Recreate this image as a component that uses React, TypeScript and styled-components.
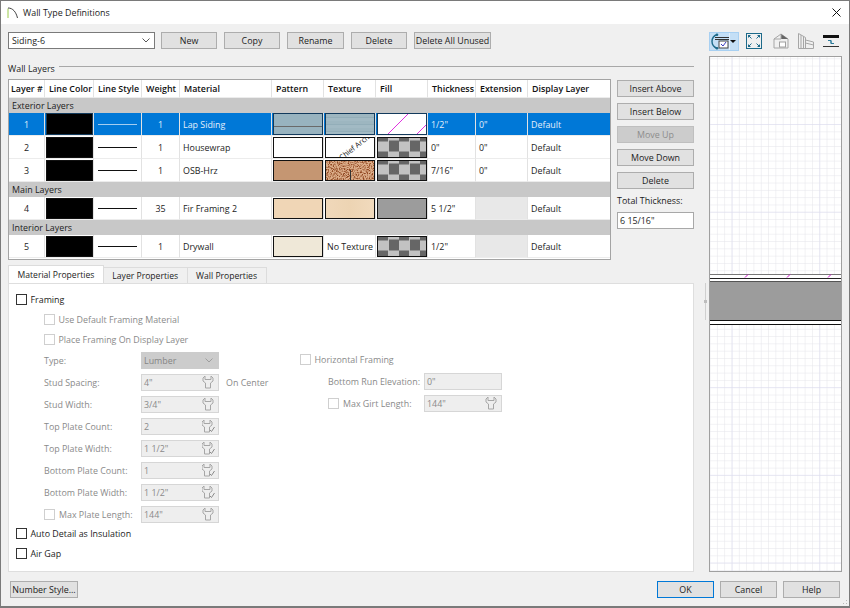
import React from "react";
import styled, { createGlobalStyle, css } from "styled-components";

const Global = createGlobalStyle`
  html, body { margin: 0; padding: 0; background: #f0f0f0; }
  body { font-family: "Open Sans", "Noto Sans", sans-serif; font-size: 8.9px; color: #1c1c1c; }
  * { box-sizing: border-box; }
`;

const Window = styled.div`
  width: 850px; height: 608px; border: 1px solid #7a7a7a; border-bottom-width: 2px;
  display: flex; flex-direction: column; background: #f0f0f0; overflow: hidden; position: relative;
`;
const TitleBar = styled.header`
  height: 23px; flex: none; background: #fff; display: flex; align-items: center; padding: 0 6px; gap: 4px;
`;
const TitleText = styled.span` font-size: 8.9px; flex: 1; `;
const Main = styled.div`
  flex: none; height: 549px; display: grid; grid-template-columns: 686px 15px 133px; padding: 8px 0 0 7px;
`;
const LeftColumn = styled.div` display: flex; flex-direction: column; min-width: 0; `;
const Toolbar = styled.div` display: flex; height: 17px; gap: 7px; align-items: stretch; `;
const Btn = styled.button<{ $w?: number; $off?: boolean; $primary?: boolean }>`
  font: inherit; padding: 0; color: #1c1c1c; background: #e1e1e1; border: 1px solid #adadad; height: 17px;
  width: ${(p) => p.$w ?? 77}px; white-space: nowrap; flex: none;
  ${(p) => p.$off && css` background: #cccccc; color: #8c8c8c; border-color: #bfbfbf; `}
  ${(p) => p.$primary && css` border: 1.5px solid #0078d7; `}
`;
const SelectBox = styled.div`
  width: 147px; background: #fff; border: 1px solid #7a7a7a; display: flex; align-items: center;
  justify-content: space-between; padding: 0 4px 0 3px; margin-right: -1px;
`;
const Legend = styled.div`
  display: flex; align-items: center; gap: 4px; margin-top: 12px; height: 14px; margin-bottom: 4px;
  &::after { content: ""; flex: 1; height: 1px; background: #a8a8a8; margin-top: -3px; }
`;
const TableArea = styled.div` display: flex; gap: 6px; height: 186px; `;
const Table = styled.div` width: 603px; height: 181px; border: 1px solid #a4a4a4; background: #fff; flex: none; `;
const cols = "36px 49px 48px 38px 92px 52px 52px 52px 48px 52px 82px";
const Row = styled.div<{ $sel?: boolean; $head?: boolean }>`
  display: grid; grid-template-columns: ${cols}; height: ${(p) => (p.$head ? 18 : 23)}px;
  ${(p) => p.$sel && css` background: #0078d7; color: #e4effa; `}
  ${(p) => p.$head && css` font-weight: 600; color: #111; `}
`;
const Group = styled.div` height: 15px; background: #c8c8c8; display: flex; align-items: center; padding-left: 3px; `;
const Cell = styled.div<{ $center?: boolean; $off?: boolean; $pad?: number }>`
  display: flex; align-items: center; min-width: 0; white-space: nowrap; padding: 0 ${(p) => p.$pad ?? 3}px;
  border-right: 1px solid #e2e2e2; border-bottom: 1px solid #ececec;
  justify-content: ${(p) => (p.$center ? "center" : "flex-start")};
  ${(p) => p.$off && css` background: #e8e8e8; `}
  &:last-child { border-right: none; }
`;
const Swatch = styled.div<{ $bg?: string; $sel?: boolean }>`
  flex: 1; height: ${(p) => (p.$sel ? 22 : 21)}px; margin-top: ${(p) => (p.$sel ? 0 : 1)}px;
  border: 1px solid ${(p) => (p.$sel ? "#123a5c" : "#111")};
  background: ${(p) => p.$bg ?? "#fff"}; position: relative; overflow: hidden;
`;
const SwatchCell = styled(Cell)` padding: 0 0 0 1px; align-items: flex-start; `;
const LineMark = styled.div<{ $sel?: boolean }>`
  width: 39px; height: 1px; background: ${(p) => (p.$sel ? "#a4cdf0" : "#111")};
`;
const WordMark = styled.span`
  position: absolute; left: 10px; top: 4px; font-size: 7.5px; white-space: nowrap; color: #111;
  transform: rotate(-38deg);
`;
const checker = "conic-gradient(#c2c2c2 25%, #666 0 50%, #c2c2c2 0 75%, #666 0) 0 -7.5px / 21px 21px";
const lap = "linear-gradient(#98b3bf 0 12px, #6a6a6a 12px 13px, #98b3bf 13px)";
const lapTex = "repeating-linear-gradient(#9db6c0 0 3px, #93aeb9 3px 4px, #a2bac4 4px 7px)";
const fir = "linear-gradient(90deg, #f0d8ba, #edd4b3 50%, #f1dabd)";
const Side = styled.div` width: 77px; display: flex; flex-direction: column; gap: 6px; padding-top: 1px; `;
const TotalLabel = styled.div` line-height: 12px; margin-bottom: -1px; `;
const TextBox = styled.div` height: 17px; background: #fff; border: 1px solid #a8a8a8; padding: 0 2px; display: flex; align-items: center; `;
const Tabs = styled.div` display: flex; align-items: flex-end; height: 18px; `;
const Tab = styled.div<{ $on?: boolean }>`
  height: ${(p) => (p.$on ? 18 : 16)}px; padding: 0 8.500px; display: flex; align-items: center; font-size: 8.6px;
  background: ${(p) => (p.$on ? "#fff" : "#f0f0f0")}; border: 1px solid #dcdcdc; border-bottom: none; margin-right: -1px;
`;
const Panel = styled.div`
  height: 289px; background: #fff; border: 1px solid #dedede; padding: 5px 8px 0 7px; color: #1c1c1c;
`;
const CheckRow = styled.label<{ $off?: boolean; $indent?: number; $h?: number }>`
  display: flex; align-items: center; gap: 3.500px; height: ${(p) => p.$h ?? 20}px; margin-left: ${(p) => p.$indent ?? 0}px;
  color: ${(p) => (p.$off ? "#8a8a8a" : "#1c1c1c")}; white-space: nowrap;
`;
const Check = styled.span<{ $off?: boolean }>`
  width: 11px; height: 11px; flex: none; background: #fff; border: 1px solid ${(p) => (p.$off ? "#cfcfcf" : "#333")};
`;
const Columns = styled.div` display: flex; height: 174px; `;
const FormLeft = styled.div` width: 284px; padding-left: 28px; flex: none; `;
const FormRight = styled.div` flex: 1; `;
const FieldRow = styled.div<{ $indent?: number; $h?: number }>`
  display: flex; align-items: center; height: ${(p) => p.$h ?? 22}px; color: #8a8a8a; margin-left: ${(p) => p.$indent ?? 0}px; white-space: nowrap;
`;
const FieldLabel = styled.div<{ $w: number }>` width: ${(p) => p.$w}px; flex: none; display: flex; align-items: center; gap: 4px; `;
const Field = styled.div`
  width: 78px; height: 17px; background: #eeeeee; border: 1px solid #d6d6d6; padding: 0 3px 0 2px; display: flex; align-items: center;
  justify-content: space-between; color: #8a8a8a; flex: none;
`;
const GraySelect = styled(Field)` background: #cccccc; border-color: #cccccc; color: #858585; padding-right: 5px; `;
const After = styled.span` margin-left: 7px; `;
const Splitter = styled.div` padding-top: 251px; padding-left: 11px; `;
const SplitLine = styled.div`
  width: 1px; height: 37px; background: #cfcfcf; position: relative;
  &::after { content: ""; position: absolute; left: -1px; top: 17px; width: 3px; height: 3px; background: #bdbdbd; }
`;
const RightColumn = styled.div` display: flex; flex-direction: column; gap: 6px; `;
const IconBar = styled.div` height: 18px; display: flex; align-items: center; position: relative; `;
const ViewToggle = styled.div`
  width: 30px; height: 19px; background: #c4dff6; border: 1px solid #a8d0f2; display: flex; align-items: center; position: relative; flex: none;
`;
const Caret = styled.span`
  position: absolute; right: 2px; top: 7px; width: 0; height: 0; border: 3px solid transparent; border-top: 3px solid #111; border-bottom: none;
`;
const ToggleDivider = styled.span` position: absolute; right: 8px; top: 0; bottom: 0; width: 1px; background: #e4f0fb; `;
const IconSlot = styled.div<{ $ml: number }>` margin-left: ${(p) => p.$ml}px; display: flex; flex: none; `;
const Preview = styled.div` width: 133px; height: 516px; border: 1px solid #a0a0a0; background: #fff; `;
const PreviewSvg = styled.svg` display: block; `;
const Footer = styled.footer` flex: none; display: flex; align-items: center; gap: 6px; padding: 8px 9px 0 9px; position: relative; `;
const Spacer = styled.div` flex: 1; `;
const Grip = styled.svg` position: absolute; right: 1px; bottom: -10px; `;

const Chevron = ({ c = "#444" }: { c?: string }) => (
  <svg width="8" height="5" viewBox="0 0 8 5"><path d="M.5.5 4 4 7.5.5" fill="none" stroke={c} strokeWidth=".9" /></svg>
);
const Wrench = ({ tick }: { tick?: boolean }) => (
  <svg width="13" height="14" viewBox="0 0 13 14" fill="none" stroke="#a6a6a6" strokeWidth="1">
    <path d="M3 1 1 3v3l2.500 2v5h5V8L11 6V3L9 1v3.500H3z" transform={tick ? "translate(-1 0)" : undefined} />
    {tick && <path d="M8 11l1.500 1.500L12.500 8" stroke="#8a8a8a" />}
  </svg>
);
const Scale = () => (
  <PreviewSvg width="131" height="514" viewBox="710 57 131 514">
    <defs>
      <pattern id="minor" x="709.6" y="58.3" width="7.31" height="7.31" patternUnits="userSpaceOnUse">
        <path d="M0 0H7.310M0 0V7.310" stroke="#e4e4ea" strokeWidth="1" fill="none" />
      </pattern>
      <pattern id="major" x="731.6" y="36.3" width="87.7" height="87.7" patternUnits="userSpaceOnUse">
        <path d="M0 0H87.700M0 0V87.700" stroke="#dcdcf2" strokeWidth="1" fill="none" />
      </pattern>
    </defs>
    <rect x="709" y="56" width="133" height="516" fill="#fff" />
    <rect x="709" y="56" width="133" height="516" fill="url(#minor)" />
    <rect x="709" y="56" width="133" height="516" fill="url(#major)" />
    <rect x="709" y="274" width="133" height="50" fill="#fff" />
    <path d="M709 274.500H842" stroke="#777" strokeWidth="1" />
    <path d="M709 278.500H842" stroke="#222" strokeWidth="1" />
    <rect x="709" y="281" width="133" height="39" fill="#9c9c9c" />
    <path d="M709 281.500H842" stroke="#555" strokeWidth="1" />
    <path d="M709 320.500H842" stroke="#111" strokeWidth="1" />
    <path d="M709 324.500H842" stroke="#111" strokeWidth="1" />
    {[745, 787, 828].map((x) => (
      <path key={x} d={`M${x} 277.500l3-3`} stroke="#d010d0" strokeWidth="1" />
    ))}
  </PreviewSvg>
);

type R = { n: number; mat: string; bg: string; tex?: string; word?: boolean; fill?: string; fillDiag?: boolean; w: number; t: string; e?: string; sel?: boolean; noTex?: boolean };
const rows: Record<string, R> = {
  a: { n: 1, mat: "Lap Siding", bg: lap, tex: lapTex, fillDiag: true, w: 1, t: '1/2"', e: '0"', sel: true },
  b: { n: 2, mat: "Housewrap", bg: "#fff", tex: "#fff", word: true, fill: checker, w: 1, t: '0"', e: '0"' },
  c: { n: 3, mat: "OSB-Hrz", bg: "#c59672", tex: "osb", fill: checker, w: 1, t: '7/16"', e: '0"' },
  d: { n: 4, mat: "Fir Framing 2", bg: "#f0d6b6", tex: fir, fill: "#9c9c9c", w: 35, t: '5 1/2"' },
  e: { n: 5, mat: "Drywall", bg: "#efe8d8", noTex: true, fill: checker, w: 1, t: '1/2"' },
};
const OsbSvg = styled.svg` position: absolute; inset: 0; `;
const Osb = () => (
  <OsbSvg width="50" height="19">
    <filter id="n" x="0" y="0" width="100%" height="100%" colorInterpolationFilters="sRGB">
      <feTurbulence type="fractalNoise" baseFrequency=".8" numOctaves="2" seed="4" />
      <feColorMatrix values="0 0 0 0 .56  0 0 0 0 .27  0 0 0 0 .12  3.400 0 0 0 -1.450" />
    </filter>
    <rect width="50" height="19" fill="#dcae8a" />
    <rect width="50" height="19" filter="url(#n)" />
    <path d="M24.500 9V19" stroke="#333" strokeWidth="1" />
  </OsbSvg>
);
const Layer = ({ r }: { r: R }) => (
  <Row $sel={r.sel}>
    <Cell $center>{r.n}</Cell>
    <SwatchCell><Swatch $bg="#000" $sel={r.sel} /></SwatchCell>
    <Cell $center><LineMark $sel={r.sel} /></Cell>
    <Cell $center>{r.w}</Cell>
    <Cell>{r.mat}</Cell>
    <SwatchCell><Swatch $bg={r.bg} $sel={r.sel} /></SwatchCell>
    {r.noTex ? <Cell>No Texture</Cell> : (
      <SwatchCell>
        <Swatch $bg={r.tex === "osb" ? "#d6a47f" : r.tex} $sel={r.sel}>
          {r.word && <WordMark>Chief Arch</WordMark>}
          {r.tex === "osb" && <Osb />}
        </Swatch>
      </SwatchCell>
    )}
    <SwatchCell>
      <Swatch $bg={r.fill} $sel={r.sel}>
        {r.fillDiag && (
          <svg width="50" height="20" style={{ display: "block" }}>
            <path d="M10 20 30 0M39 20 50 9" stroke="#e030e0" strokeWidth="1" />
          </svg>
        )}
      </Swatch>
    </SwatchCell>
    <Cell>{r.t}</Cell>
    <Cell $off={!r.e}>{r.e}</Cell>
    <Cell>Default</Cell>
  </Row>
);

export default function App() {
  return (
    <Window>
      <Global />
      <TitleBar>
        <svg width="12" height="13" viewBox="0 0 12 13" fill="none">
          <path d="M1 2.500V12" stroke="#9acb4a" strokeWidth="1" />
          <path d="M1 2C6 2 9 6 10.500 12" stroke="#444" strokeWidth="1" />
        </svg>
        <TitleText>Wall Type Definitions</TitleText>
        <svg width="9" height="9" viewBox="0 0 9 9" style={{ marginRight: 2 }}><path d="M.5.5l8 8M8.500.5l-8 8" stroke="#111" strokeWidth="1" /></svg>
      </TitleBar>
      <Main>
        <LeftColumn>
          <Toolbar>
            <SelectBox>Siding-6<Chevron /></SelectBox>
            <Btn $w={56}>New</Btn>
            <Btn $w={56}>Copy</Btn>
            <Btn $w={57}>Rename</Btn>
            <Btn $w={56}>Delete</Btn>
            <Btn $w={77}>Delete All Unused</Btn>
          </Toolbar>
          <Legend>Wall Layers</Legend>
          <TableArea>
            <Table>
              <Row $head>
                {["Layer #", "Line Color", "Line Style", "Weight", "Material", "Pattern", "Texture", "Fill", "Thickness", "Extension", "Display Layer"].map((h) => (
                  <Cell key={h} $pad={h === "Layer #" ? 2 : 4}>{h}</Cell>
                ))}
              </Row>
              <Group>Exterior Layers</Group>
              <Layer r={rows.a} />
              <Layer r={rows.b} />
              <Layer r={rows.c} />
              <Group>Main Layers</Group>
              <Layer r={rows.d} />
              <Group>Interior Layers</Group>
              <Layer r={rows.e} />
            </Table>
            <Side>
              <Btn>Insert Above</Btn>
              <Btn>Insert Below</Btn>
              <Btn $off>Move Up</Btn>
              <Btn>Move Down</Btn>
              <Btn>Delete</Btn>
              <TotalLabel>Total Thickness:</TotalLabel>
              <TextBox>6 15/16"</TextBox>
            </Side>
          </TableArea>
          <Tabs>
            <Tab $on>Material Properties</Tab>
            <Tab>Layer Properties</Tab>
            <Tab>Wall Properties</Tab>
          </Tabs>
          <Panel>
            <CheckRow><Check />Framing</CheckRow>
            <CheckRow $off $indent={28}><Check $off />Use Default Framing Material</CheckRow>
            <CheckRow $off $indent={28}><Check $off />Place Framing On Display Layer</CheckRow>
            <Columns>
              <FormLeft>
                <FieldRow><FieldLabel $w={97}>Type:</FieldLabel><GraySelect>Lumber<Chevron c="#999" /></GraySelect></FieldRow>
                <FieldRow><FieldLabel $w={97}>Stud Spacing:</FieldLabel><Field>4"<Wrench /></Field><After>On Center</After></FieldRow>
                <FieldRow><FieldLabel $w={97}>Stud Width:</FieldLabel><Field>3/4"<Wrench /></Field></FieldRow>
                <FieldRow><FieldLabel $w={97}>Top Plate Count:</FieldLabel><Field>2<Wrench tick /></Field></FieldRow>
                <FieldRow><FieldLabel $w={97}>Top Plate Width:</FieldLabel><Field>1 1/2"<Wrench tick /></Field></FieldRow>
                <FieldRow><FieldLabel $w={97}>Bottom Plate Count:</FieldLabel><Field>1<Wrench tick /></Field></FieldRow>
                <FieldRow><FieldLabel $w={97}>Bottom Plate Width:</FieldLabel><Field>1 1/2"<Wrench tick /></Field></FieldRow>
                <FieldRow><FieldLabel $w={97}><Check $off />Max Plate Length:</FieldLabel><Field>144"<Wrench /></Field></FieldRow>
              </FormLeft>
              <FormRight>
                <CheckRow $off $h={21}><Check $off />Horizontal Framing</CheckRow>
                <FieldRow $indent={28}><FieldLabel $w={96}>Bottom Run Elevation:</FieldLabel><Field>0"</Field></FieldRow>
                <FieldRow $indent={28}><FieldLabel $w={96}><Check $off />Max Girt Length:</FieldLabel><Field>144"<Wrench /></Field></FieldRow>
              </FormRight>
            </Columns>
            <CheckRow><Check />Auto Detail as Insulation</CheckRow>
            <CheckRow><Check />Air Gap</CheckRow>
          </Panel>
        </LeftColumn>
        <Splitter><SplitLine /></Splitter>
        <RightColumn>
          <IconBar>
            <ViewToggle>
              <svg width="21" height="17" viewBox="0 0 21 17" fill="none">
                <path d="M7 1.500C3 3 2 6 2 8.500s1 5 5 7" stroke="#1d6a8a" strokeWidth="1.400" />
                <path d="M5 4.500H19M5 6.500H19" stroke="#333" strokeWidth="1" />
                <rect x="9" y="8" width="9" height="7" fill="#fff" stroke="#444" />
                <path d="M11 11l2 2 3-4" stroke="#3a3ac0" strokeWidth="1" />
                <circle cx="7" cy="1.800" r="1.300" fill="#1d6a8a" /><circle cx="7" cy="15.200" r="1.300" fill="#1d6a8a" />
              </svg>
              <ToggleDivider />
              <Caret />
            </ViewToggle>
            <IconSlot $ml={7}>
              <svg width="16" height="16" viewBox="0 0 16 16" fill="none">
                <rect x=".5" y=".5" width="15" height="15" stroke="#1d6a8a" />
                <path d="M2.500 2.500l3 3M13.500 2.500l-3 3M2.500 13.500l3-3M13.500 13.500l-3-3" stroke="#1d6a8a" />
                <path d="M2 2h3L2 5zM14 2h-3l3 3zM2 14h3l-3-3zM14 14h-3l3-3z" fill="#1d6a8a" />
              </svg>
            </IconSlot>
            <IconSlot $ml={11}>
              <svg width="16" height="16" viewBox="0 0 16 16" fill="none">
                <path d="M1 6 8 1l7 5v9H1z" stroke="#a6a6a6" />
                <path d="M8 1l7 5H8z" fill="#666" />
                <path d="M8 1v5H1" stroke="#a6a6a6" />
                <rect x="6.500" y="9" width="6" height="5" fill="#fff" stroke="#a0a0a0" />
              </svg>
            </IconSlot>
            <IconSlot $ml={9}>
              <svg width="16" height="16" viewBox="0 0 16 16" fill="none" stroke="#a6a6a6">
                <path d="M.5 15.500V.5l7 4v11M3 15.500V2M5.500 15.500V3.500M7.500 7l8 2v6.500H.5M7.500 10l8 2" />
              </svg>
            </IconSlot>
            <IconSlot $ml={9}>
              <svg width="16" height="14" viewBox="0 0 16 14" fill="none">
                <rect y="1" width="16" height="3" fill="#111" />
                <path d="M0 12.500H16" stroke="#333" />
                <path d="M5 6.500h3v3M11 9.500H8V6.500" stroke="#2a7a9a" />
              </svg>
            </IconSlot>
          </IconBar>
          <Preview><Scale /></Preview>
        </RightColumn>
      </Main>
      <Footer>
        <Btn $w={68}>Number Style...</Btn>
        <Spacer />
        <Btn $w={57} $primary>OK</Btn>
        <Btn $w={57}>Cancel</Btn>
        <Btn $w={57}>Help</Btn>
        <Grip width="10" height="10" viewBox="0 0 10 10">
          <path d="M8 2h1v1H8zM8 5h1v1H8zM5 5h1v1H5zM8 8h1v1H8zM5 8h1v1H5zM2 8h1v1H2z" fill="#b8b8b8" />
        </Grip>
      </Footer>
    </Window>
  );
}
